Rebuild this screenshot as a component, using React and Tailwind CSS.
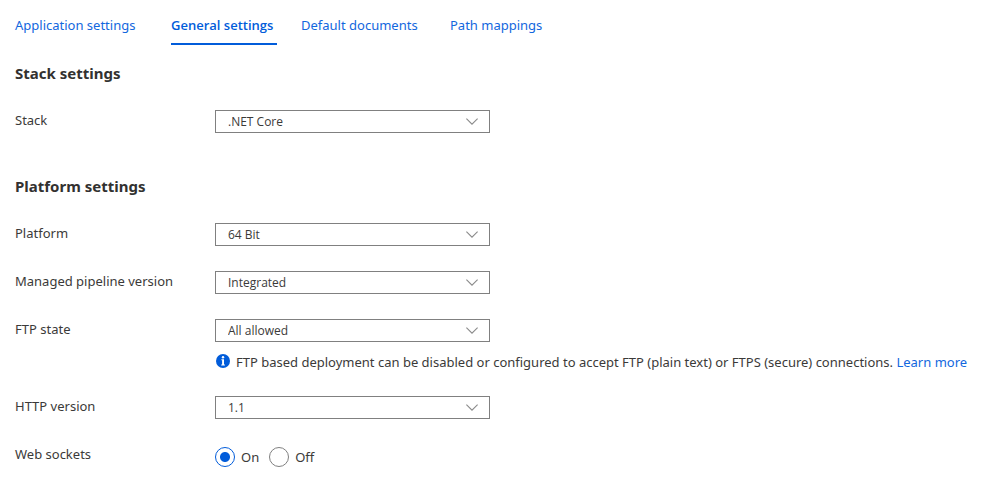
import { useState } from "react";

const tabs = [
  { name: "Application settings", width: "w-33" },
  { name: "General settings", width: "w-[106px]" },
  { name: "Default documents", width: "w-[125px]" },
  { name: "Path mappings", width: "w-25" },
];

function Tabs() {
  const [active, setActive] = useState("General settings");
  return (
    <div role="tablist" className="flex gap-6">
      {tabs.map(({ name, width }) => (
        <button
          key={name}
          type="button"
          role="tab"
          aria-selected={active === name}
          onClick={() => setActive(name)}
          className={`${width} h-[30px] border-b-2 pb-2 text-left leading-5 whitespace-nowrap ${
            active === name
              ? "border-[#015cda] font-['Open_Sans',sans-serif] font-semibold text-[#015cda]"
              : "border-transparent text-[#1267de]"
          }`}
        >
          {name}
        </button>
      ))}
    </div>
  );
}

function Row({ id, label, children }) {
  return (
    <div className="flex items-start">
      <label htmlFor={id} className="w-50 shrink-0 leading-5">
        {label}
      </label>
      <div className="min-w-0 flex-1">{children}</div>
    </div>
  );
}

function Select({ id, options }) {
  return (
    <div className="relative w-[275px] max-w-full">
      <select
        id={id}
        className="block h-[23px] w-full appearance-none border border-[#808080] bg-white pr-8 pl-3 font-['Open_Sans',sans-serif] text-[12px] leading-5 text-[#3b3a39]"
      >
        {options.map((option) => (
          <option key={option}>{option}</option>
        ))}
      </select>
      <svg
        aria-hidden="true"
        viewBox="0 0 12 7"
        className="pointer-events-none absolute top-2 right-3 h-[7px] w-3"
        fill="none"
        stroke="#8a8a8a"
        strokeWidth="1.1"
      >
        <path d="M0.4 0.6 6 6.2 11.6 0.6" />
      </svg>
    </div>
  );
}

function Radio({ id, label, checked, onChange }) {
  return (
    <div className="flex items-center gap-[6px]">
      <input
        id={id}
        type="radio"
        name="web-sockets"
        checked={checked}
        onChange={onChange}
        className="size-5 appearance-none rounded-full border border-[#808080] bg-white checked:border-[#015cda] checked:bg-[radial-gradient(circle,#015cda_0_4.5px,transparent_5.5px)]"
      />
      <label htmlFor={id} className="leading-5">
        {label}
      </label>
    </div>
  );
}

function InfoIcon() {
  return (
    <svg aria-hidden="true" viewBox="0 0 14 14" className="mt-px size-[14px] shrink-0">
      <circle cx="7" cy="7" r="7" fill="#015cda" />
      <circle cx="7" cy="3.3" r="1.2" fill="#fff" />
      <path d="M5.4 5.3H8V10.4H8.9V11.4H5.2V10.4H6.1V6.3H5.4Z" fill="#fff" />
    </svg>
  );
}

export default function App() {
  const [sockets, setSockets] = useState(true);
  return (
    <main className="bg-white px-[15px] pt-[15px] pb-4 font-['Noto_Sans','Open_Sans',sans-serif] text-[13px] text-[#3b3a39]">
      <Tabs />

      <section className="pt-[18px]">
        <h2 className="text-[15px] leading-5 font-bold text-[#323130]">Stack settings</h2>
        <div className="pt-[27px]">
          <Row id="stack" label="Stack">
            <Select id="stack" options={[".NET Core", ".NET", "Java", "PHP"]} />
          </Row>
        </div>
      </section>

      <section className="pt-[43px]">
        <h2 className="text-[15px] leading-5 font-bold text-[#323130]">Platform settings</h2>
        <div className="flex flex-col gap-[25px] pt-[27px]">
          <Row id="platform" label="Platform">
            <Select id="platform" options={["64 Bit", "32 Bit"]} />
          </Row>
          <Row id="pipeline" label="Managed pipeline version">
            <Select id="pipeline" options={["Integrated", "Classic"]} />
          </Row>
          <Row id="ftp" label="FTP state">
            <Select id="ftp" options={["All allowed", "FTPS only", "Disabled"]} />
            <div className="flex gap-[6px] pt-[11px] pl-px leading-[18px]">
              <InfoIcon />
              <p>
                FTP based deployment can be disabled or configured to accept FTP (plain text) or
                FTPS (secure) connections.{" "}
                <a href="#learn-more" className="text-[#1267de]">
                  Learn more
                </a>
              </p>
            </div>
          </Row>
          <Row id="http" label="HTTP version">
            <Select id="http" options={["1.1", "2.0"]} />
          </Row>
          <Row id="sockets-on" label="Web sockets">
            <div className="flex gap-[10px] pt-[3px]">
              <Radio id="sockets-on" label="On" checked={sockets} onChange={() => setSockets(true)} />
              <Radio id="sockets-off" label="Off" checked={!sockets} onChange={() => setSockets(false)} />
            </div>
          </Row>
        </div>
      </section>
    </main>
  );
}
